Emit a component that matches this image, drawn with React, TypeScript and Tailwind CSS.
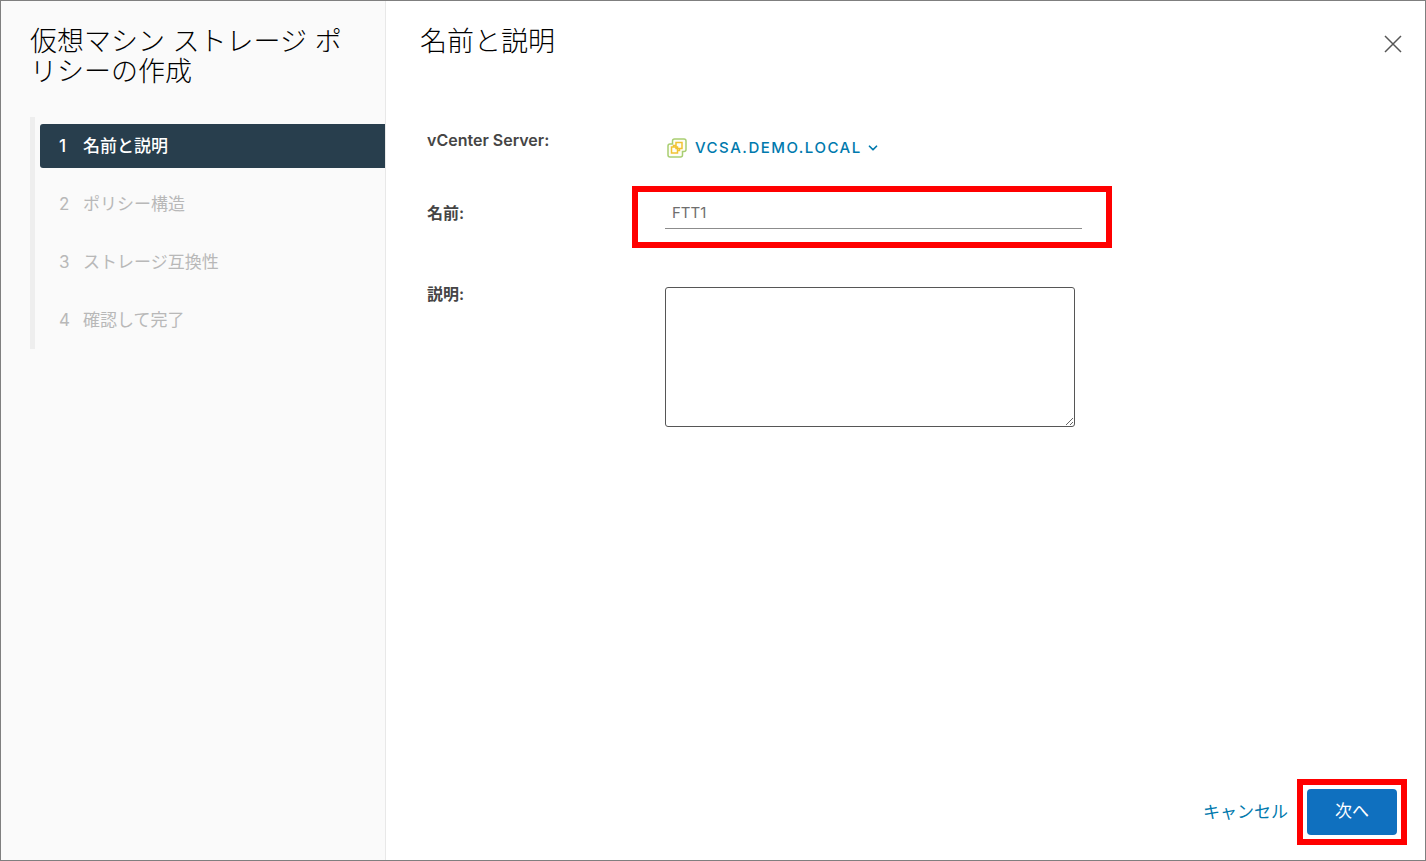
import { useState } from "react";
import { ChevronDown } from "lucide-react";

const steps = [
    { id: 1, title: "名前と説明" },
    { id: 2, title: "ポリシー構造" },
    { id: 3, title: "ストレージ互換性" },
    { id: 4, title: "確認して完了" },
];

const VCenterIcon = () => (
    <svg width="20" height="20" viewBox="0 0 20 20" fill="none" aria-hidden="true" className="shrink-0">
        <path
            d="M7.500 1H17a2 2 0 0 1 2 2v8.500a2 2 0 0 1-2 2h-1.500V17a2 2 0 0 1-2 2H3a2 2 0 0 1-2-2V8a2 2 0 0 1 2-2h2.500V3a2 2 0 0 1 2-2z"
            fill="#fdfef6"
            stroke="#a9ce72"
            strokeWidth="1.500"
        />
        <g stroke="#f1c232" strokeWidth="1.500">
            <rect x="9" y="4.500" width="6" height="6" />
            <rect x="4.500" y="9" width="6" height="6" />
            <path d="M9 7.500H6.500V9M10.500 12.500h2v-2" />
        </g>
    </svg>
);

const CloseIcon = () => (
    <svg width="18" height="18" viewBox="0 0 18 18" stroke="#565656" strokeWidth="1.500" aria-hidden="true">
        <path d="M1 1l16 16M17 1L1 17" />
    </svg>
);

const Sidebar = ({ current }: { current: number }) => (
    <aside className="w-[385px] shrink-0 border-r border-[#e8e8e8] bg-[#fafafa] pt-[26px] pl-[29px]">
        <h1 className="pr-6 text-[27px] leading-[30px] font-light text-black">
            仮想マシン ストレージ ポリシーの作成
        </h1>

        <ol className="mt-[30px] flex flex-col gap-[14px] border-l-[5px] border-[#eeeeee] py-[7px] pl-[5px]">
            {steps.map((step) => (
                <li key={step.id}>
                    <button
                        type="button"
                        disabled={step.id > current}
                        className={`flex h-11 w-full items-center rounded-l-[3px] pt-[2px] pl-[19px] text-left text-[17px] ${
                            step.id === current ? "bg-[#283e4d] font-medium text-white" : "text-[#b8b8b8]"
                        }`}
                    >
                        <span className="w-6 shrink-0">{step.id}</span>
                        <span>{step.title}</span>
                    </button>
                </li>
            ))}
        </ol>
    </aside>
);

const App = () => {
    const [name, setName] = useState("FTT1");
    const [description, setDescription] = useState("");

    return (
        <div className="flex min-h-screen border border-[#7f7f7f] bg-white font-['Inter','Noto_Sans_CJK_JP',sans-serif]">
            <Sidebar current={1} />

            <main className="flex min-w-0 flex-1 flex-col pl-[34px]">
                <header className="flex items-start justify-between pt-[26px] pr-[23px]">
                    <h2 className="text-[27px] leading-[30px] font-light text-black">名前と説明</h2>
                    <button type="button" aria-label="閉じる" className="mt-2">
                        <CloseIcon />
                    </button>
                </header>

                <form className="mt-[71px] flex flex-col pl-[7px] text-[15px] leading-6 text-[#454545]">
                    <div className="flex">
                        <label htmlFor="vcenter" className="w-[238px] shrink-0 text-base font-semibold">
                            vCenter Server:
                        </label>
                        <button
                            id="vcenter"
                            type="button"
                            aria-haspopup="listbox"
                            className="mt-2 flex items-center gap-2 pl-[2px] font-medium text-[#0079ad]"
                        >
                            <VCenterIcon />
                            <span className="flex items-center gap-1">
                                <span className="tracking-widest">VCSA.DEMO.LOCAL</span>
                                <ChevronDown size={14} strokeWidth={3} />
                            </span>
                        </button>
                    </div>

                    <div className="mt-[41px] flex">
                        <label htmlFor="name" className="w-[238px] shrink-0 text-base font-semibold">
                            名前:
                        </label>
                        <div className="relative w-full max-w-[417px]">
                            <input
                                id="name"
                                type="text"
                                value={name}
                                onChange={(e) => setName(e.target.value)}
                                className="block h-7 w-full border-b border-[#8c8c8c] px-[7px] pb-1 text-[#6e6e6e] outline-none"
                            />
                            <div className="pointer-events-none absolute -top-[15px] -right-[30px] -bottom-[19px] -left-[33px] border-6 border-[#ff0000]" />
                        </div>
                    </div>

                    <div className="mt-[53px] flex">
                        <label htmlFor="description" className="w-[238px] shrink-0 text-base font-semibold">
                            説明:
                        </label>
                        <textarea
                            id="description"
                            value={description}
                            onChange={(e) => setDescription(e.target.value)}
                            className="mt-[5px] h-[140px] w-full max-w-[410px] resize rounded-[3px] border border-[#565656] px-2 py-1 outline-none"
                        />
                    </div>
                </form>

                <footer className="mt-auto flex items-center justify-end gap-[9px] pr-[18px] pb-[15px] text-[17px]">
                    <button type="button" className="pt-[2px] text-[#0079ad]">
                        キャンセル
                    </button>
                    <div className="border-6 border-[#ff0000] p-1">
                        <button type="button" className="block h-[46px] w-[90px] rounded-[4px] bg-[#0f70bf] text-white">
                            次へ
                        </button>
                    </div>
                </footer>
            </main>
        </div>
    );
};

export default App;
